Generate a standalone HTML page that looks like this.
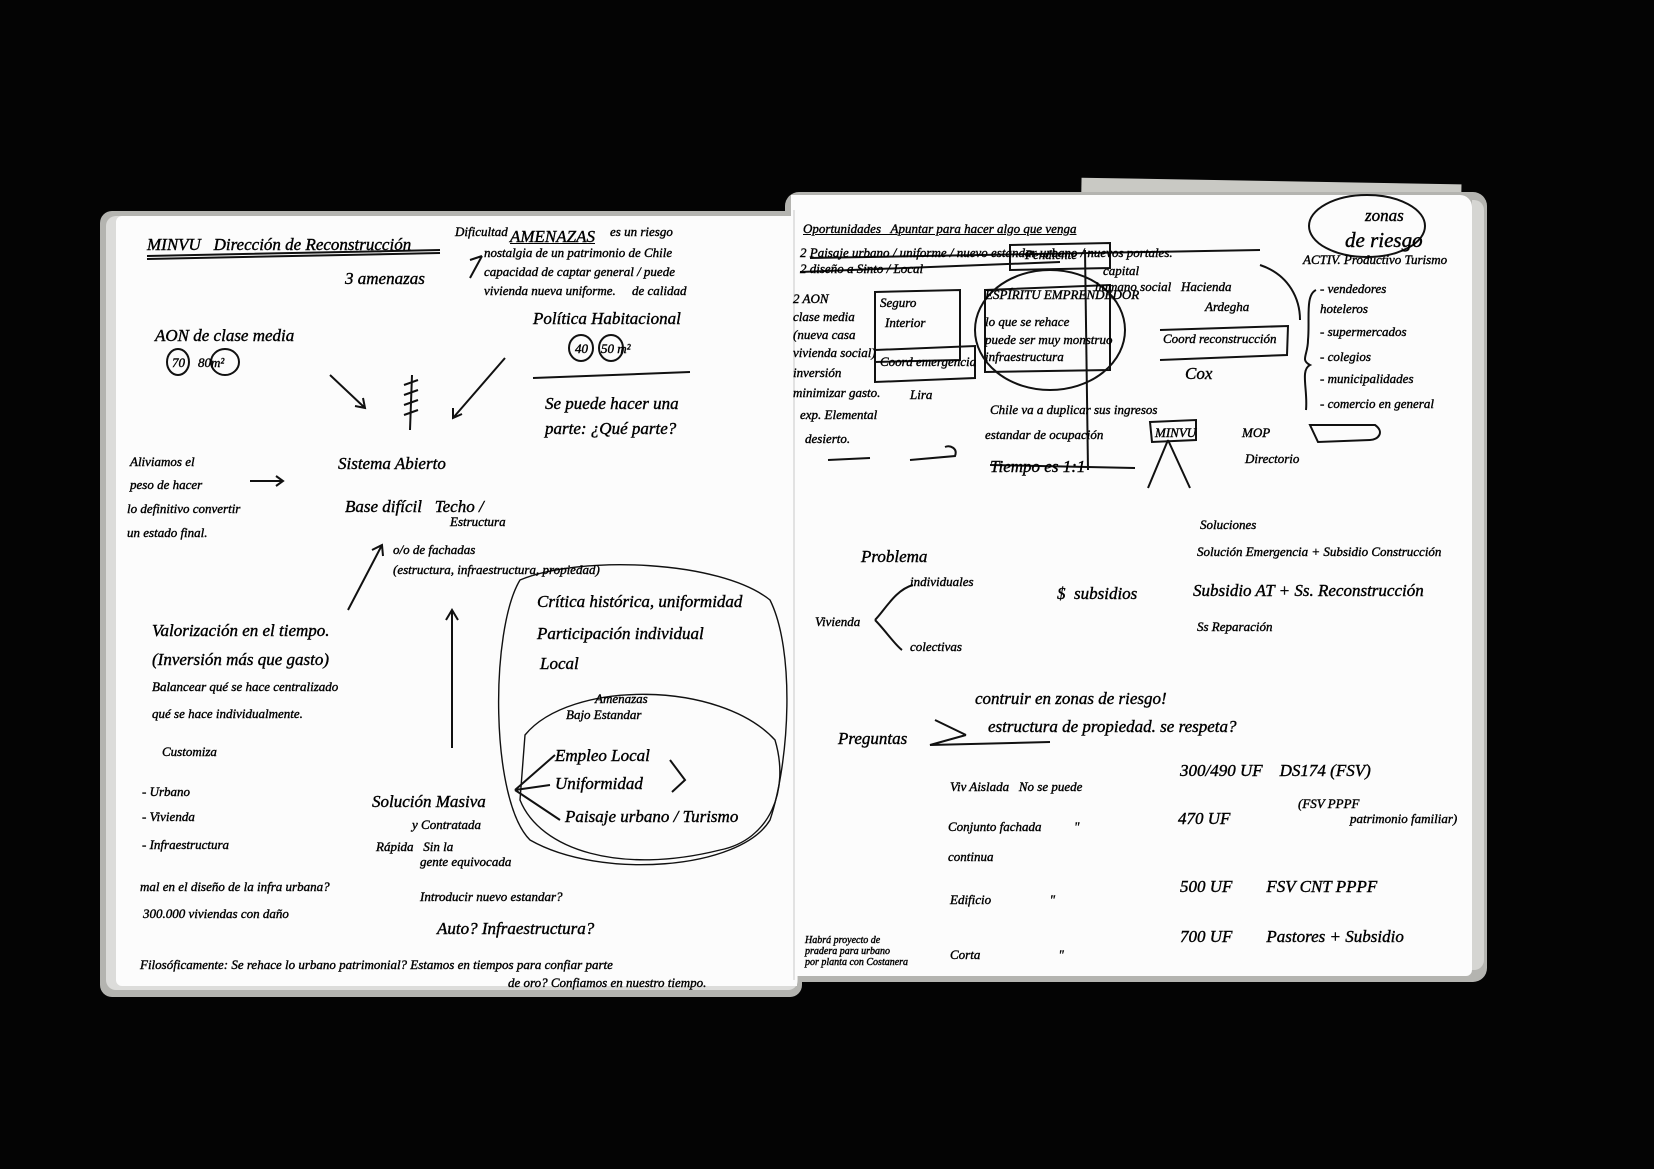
<!DOCTYPE html>
<html><head><meta charset="utf-8"><style>
html,body{margin:0;padding:0;}
body{width:1654px;height:1169px;background:#040404;position:relative;overflow:hidden;font-family:"Liberation Serif",serif;font-style:italic;color:#000;}
.a{position:absolute;white-space:nowrap;font-size:17px;line-height:1;-webkit-text-stroke:0.4px #000;}
.s{font-size:13px}
.l{font-size:21px}
</style></head><body>
<div style="position:absolute;left:1081px;top:181px;width:380px;height:60px;background:#c9c9c4;transform:rotate(1deg)"></div>
<div style="position:absolute;left:1440px;top:250px;width:30px;height:120px;background:#bdbdb8"></div>
<div style="position:absolute;left:100px;top:211px;width:702px;height:786px;background:#b4b4b0;border-radius:12px"></div>
<div style="position:absolute;left:785px;top:192px;width:702px;height:790px;background:#b4b4b0;border-radius:14px"></div>
<div style="position:absolute;left:106px;top:216px;width:692px;height:774px;background:#dcdcda;border-radius:10px"></div>
<div style="position:absolute;left:116px;top:216px;width:681px;height:770px;background:#fcfcfc;border-radius:6px 0 0 6px"></div>
<div style="position:absolute;left:791px;top:195px;width:681px;height:781px;background:#fcfcfc;border-radius:0 12px 6px 0"></div>
<div style="position:absolute;left:1472px;top:200px;width:12px;height:770px;background:#d5d5d2;border-radius:0 10px 10px 0"></div>
<div style="position:absolute;left:793px;top:210px;width:2px;height:770px;background:#e2e2e2"></div>

<svg width="1654" height="1169" style="position:absolute;left:0;top:0" fill="none" stroke="#111" stroke-width="2">
<path d="M147 256 L440 250 M147 259 L440 253"/>
<path d="M482 256 L470 260 M482 256 L470 278"/>
<ellipse cx="178" cy="362" rx="11" ry="13"/><ellipse cx="225" cy="362" rx="14" ry="13"/>
<ellipse cx="581" cy="348" rx="12" ry="13"/><ellipse cx="611" cy="348" rx="12" ry="13"/>
<path d="M533 378 L690 372"/>
<path d="M330 375 L365 408 M363 398 L365 408 L355 406"/>
<path d="M505 358 L453 418 M453 408 L453 418 L462 414"/>
<path d="M412 375 L410 430 M404 385 l14 -5 M404 395 l14 -5 M404 405 l14 -5 M404 415 l14 -5"/>
<path d="M250 481 L283 481 M276 476 L283 481 L276 486"/>
<path d="M348 610 L382 545 M372 550 L382 545 L383 556"/>
<path d="M452 748 L452 610 M446 620 L452 610 L458 620"/>
<path d="M520 580 C580 555 720 560 770 600 C795 650 790 760 770 820 C740 870 600 880 530 840 C490 800 490 630 520 580 Z" stroke-width="1.4"/>
<path d="M525 735 C570 680 720 680 775 740 C790 790 770 840 720 850 C620 875 540 850 520 800 Z" stroke-width="1.4"/>
<path d="M515 790 L555 755 M515 790 L550 785 M515 790 L560 820 M670 760 L685 780 L672 792"/>
<path d="M810 258 L1260 250 M800 272 L1060 262"/>
<path d="M1010 245 L1110 243 L1110 268 L1010 270 Z"/>
<path d="M875 292 L960 290 L960 360 L875 362 Z"/>
<path d="M875 350 L975 346 L975 378 L875 382 Z"/>
<path d="M985 290 L1110 285 L1110 370 L985 372 Z"/>
<ellipse cx="1050" cy="330" rx="75" ry="60"/>
<path d="M1085 250 L1088 470"/>
<path d="M1160 330 L1288 326 L1287 355 L1160 360"/>
<path d="M1260 265 C1290 275 1300 300 1300 320"/>
<ellipse cx="1367" cy="226" rx="58" ry="31"/>
<path d="M1316 290 C1305 295 1310 320 1308 340 C1308 355 1300 360 1310 365 C1300 370 1308 390 1306 410"/>
<path d="M1150 422 L1196 420 L1196 440 L1152 442 Z"/>
<path d="M1168 440 L1148 488 M1168 440 L1190 488"/>
<path d="M1310 425 L1375 425 C1385 432 1378 440 1370 440 L1318 442 Z"/>
<path d="M828 460 L870 458 M910 460 L955 456 C958 448 950 445 945 447"/>
<path d="M990 465 L1135 468"/>
<path d="M913 585 C895 590 885 610 875 620 M875 620 C885 630 895 645 902 650"/>
<path d="M966 735 L930 745 L1050 742 M966 735 L935 720"/>
</svg>

<div class="a" style="left:147px;top:236px">MINVU &nbsp; Dirección de Reconstrucción</div>
<div class="a s" style="left:455px;top:225px">Dificultad</div>
<div class="a" style="left:510px;top:228px;text-decoration:underline">AMENAZAS</div>
<div class="a s" style="left:610px;top:225px">es un riesgo</div>
<div class="a s" style="left:484px;top:246px">nostalgia de un patrimonio de Chile</div>
<div class="a s" style="left:484px;top:265px">capacidad de captar general / puede</div>
<div class="a s" style="left:484px;top:284px">vivienda nueva uniforme. &nbsp;&nbsp;&nbsp; de calidad</div>
<div class="a" style="left:345px;top:270px">3 amenazas</div>
<div class="a" style="left:155px;top:327px">AON de clase media</div>
<div class="a s" style="left:172px;top:356px">70 &nbsp;&nbsp; 80m²</div>
<div class="a" style="left:533px;top:310px">Política Habitacional</div>
<div class="a s" style="left:575px;top:342px">40 &nbsp;&nbsp; 50 m²</div>
<div class="a" style="left:545px;top:395px">Se puede hacer una</div>
<div class="a" style="left:545px;top:420px">parte: ¿Qué parte?</div>
<div class="a s" style="left:130px;top:455px">Aliviamos el</div>
<div class="a s" style="left:130px;top:478px">peso de hacer</div>
<div class="a s" style="left:127px;top:502px">lo definitivo convertir</div>
<div class="a s" style="left:127px;top:526px">un estado final.</div>
<div class="a" style="left:338px;top:455px">Sistema Abierto</div>
<div class="a" style="left:345px;top:498px">Base difícil &nbsp; Techo /</div>
<div class="a s" style="left:450px;top:515px">Estructura</div>
<div class="a s" style="left:393px;top:543px">o/o de fachadas</div>
<div class="a s" style="left:393px;top:563px">(estructura, infraestructura, propiedad)</div>
<div class="a" style="left:537px;top:593px">Crítica histórica, uniformidad</div>
<div class="a" style="left:537px;top:625px">Participación individual</div>
<div class="a" style="left:540px;top:655px">Local</div>
<div class="a s" style="left:595px;top:692px">Amenazas</div>
<div class="a s" style="left:566px;top:708px">Bajo Estandar</div>
<div class="a" style="left:555px;top:747px">Empleo Local</div>
<div class="a" style="left:555px;top:775px">Uniformidad</div>
<div class="a" style="left:565px;top:808px">Paisaje urbano / Turismo</div>
<div class="a" style="left:152px;top:622px">Valorización en el tiempo.</div>
<div class="a" style="left:152px;top:651px">(Inversión más que gasto)</div>
<div class="a s" style="left:152px;top:680px">Balancear qué se hace centralizado</div>
<div class="a s" style="left:152px;top:707px">qué se hace individualmente.</div>
<div class="a s" style="left:162px;top:745px">Customiza</div>
<div class="a s" style="left:142px;top:785px">- Urbano</div>
<div class="a s" style="left:142px;top:810px">- Vivienda</div>
<div class="a s" style="left:142px;top:838px">- Infraestructura</div>
<div class="a" style="left:372px;top:793px">Solución Masiva</div>
<div class="a s" style="left:412px;top:818px">y Contratada</div>
<div class="a s" style="left:376px;top:840px">Rápida &nbsp; Sin la</div>
<div class="a s" style="left:420px;top:855px">gente equivocada</div>
<div class="a s" style="left:140px;top:880px">mal en el diseño de la infra urbana?</div>
<div class="a s" style="left:143px;top:907px">300.000 viviendas con daño</div>
<div class="a s" style="left:420px;top:890px">Introducir nuevo estandar?</div>
<div class="a" style="left:437px;top:920px">Auto? Infraestructura?</div>
<div class="a s" style="left:140px;top:958px">Filosóficamente: Se rehace lo urbano patrimonial? Estamos en tiempos para confiar parte</div>
<div class="a s" style="left:508px;top:976px">de oro? Confiamos en nuestro tiempo.</div>

<div class="a s" style="left:803px;top:222px;text-decoration:underline">Oportunidades &nbsp; Apuntar para hacer algo que venga</div>
<div class="a s" style="left:800px;top:246px">2 Paisaje urbano / uniforme / nuevo estandar urbano / nuevos portales.</div>
<div class="a s" style="left:800px;top:262px">2 diseño a Sinto / Local</div>
<div class="a" style="left:1365px;top:207px">zonas</div>
<div class="a l" style="left:1345px;top:230px">de riesgo</div>
<div class="a s" style="left:1025px;top:248px">Pendiente</div>
<div class="a s" style="left:1103px;top:264px">capital</div>
<div class="a s" style="left:1095px;top:280px">humano social &nbsp; Hacienda</div>
<div class="a s" style="left:1205px;top:300px">Ardegha</div>
<div class="a s" style="left:1303px;top:253px">ACTIV. Productivo Turismo</div>
<div class="a s" style="left:1320px;top:282px">- vendedores</div>
<div class="a s" style="left:1320px;top:302px">hoteleros</div>
<div class="a s" style="left:1320px;top:325px">- supermercados</div>
<div class="a s" style="left:1320px;top:350px">- colegios</div>
<div class="a s" style="left:1320px;top:372px">- municipalidades</div>
<div class="a s" style="left:1320px;top:397px">- comercio en general</div>
<div class="a s" style="left:793px;top:292px">2 AON</div>
<div class="a s" style="left:793px;top:310px">clase media</div>
<div class="a s" style="left:793px;top:328px">(nueva casa</div>
<div class="a s" style="left:793px;top:346px">vivienda social)</div>
<div class="a s" style="left:793px;top:366px">inversión</div>
<div class="a s" style="left:793px;top:386px">minimizar gasto.</div>
<div class="a s" style="left:800px;top:408px">exp. Elemental</div>
<div class="a s" style="left:805px;top:432px">desierto.</div>
<div class="a s" style="left:880px;top:296px">Seguro</div>
<div class="a s" style="left:885px;top:316px">Interior</div>
<div class="a s" style="left:880px;top:355px">Coord emergencia</div>
<div class="a s" style="left:910px;top:388px">Lira</div>
<div class="a s" style="left:985px;top:288px">ESPÍRITU EMPRENDEDOR</div>
<div class="a s" style="left:985px;top:315px">lo que se rehace</div>
<div class="a s" style="left:985px;top:333px">puede ser muy monstruo</div>
<div class="a s" style="left:985px;top:350px">infraestructura</div>
<div class="a s" style="left:1163px;top:332px">Coord reconstrucción</div>
<div class="a" style="left:1185px;top:365px">Cox</div>
<div class="a s" style="left:990px;top:403px">Chile va a duplicar sus ingresos</div>
<div class="a s" style="left:985px;top:428px">estandar de ocupación</div>
<div class="a s" style="left:1155px;top:426px">MINVU</div>
<div class="a s" style="left:1242px;top:426px">MOP</div>
<div class="a s" style="left:1245px;top:452px">Directorio</div>
<div class="a" style="left:990px;top:458px">Tiempo es 1:1</div>
<div class="a s" style="left:1200px;top:518px">Soluciones</div>
<div class="a s" style="left:1197px;top:545px">Solución Emergencia + Subsidio Construcción</div>
<div class="a" style="left:861px;top:548px">Problema</div>
<div class="a s" style="left:910px;top:575px">individuales</div>
<div class="a" style="left:1057px;top:585px">$ &nbsp;subsidios</div>
<div class="a" style="left:1193px;top:582px">Subsidio AT + Ss. Reconstrucción</div>
<div class="a s" style="left:815px;top:615px">Vivienda</div>
<div class="a s" style="left:910px;top:640px">colectivas</div>
<div class="a s" style="left:1197px;top:620px">Ss Reparación</div>
<div class="a" style="left:975px;top:690px">contruir en zonas de riesgo!</div>
<div class="a" style="left:838px;top:730px">Preguntas</div>
<div class="a" style="left:988px;top:718px">estructura de propiedad. se respeta?</div>
<div class="a s" style="left:950px;top:780px">Viv Aislada &nbsp; No se puede</div>
<div class="a" style="left:1180px;top:762px">300/490 UF &nbsp;&nbsp; DS174 (FSV)</div>
<div class="a s" style="left:948px;top:820px">Conjunto fachada &nbsp;&nbsp;&nbsp;&nbsp;&nbsp;&nbsp;&nbsp;&nbsp; "</div>
<div class="a s" style="left:948px;top:850px">continua</div>
<div class="a" style="left:1178px;top:810px">470 UF</div>
<div class="a s" style="left:1298px;top:797px">(FSV PPPF</div>
<div class="a s" style="left:1350px;top:812px">patrimonio familiar)</div>
<div class="a s" style="left:950px;top:893px">Edificio &nbsp;&nbsp;&nbsp;&nbsp;&nbsp;&nbsp;&nbsp;&nbsp;&nbsp;&nbsp;&nbsp;&nbsp;&nbsp;&nbsp;&nbsp;&nbsp; "</div>
<div class="a" style="left:1180px;top:878px">500 UF &nbsp;&nbsp;&nbsp;&nbsp;&nbsp;&nbsp; FSV CNT PPPF</div>
<div class="a s" style="left:950px;top:948px">Corta &nbsp;&nbsp;&nbsp;&nbsp;&nbsp;&nbsp;&nbsp;&nbsp;&nbsp;&nbsp;&nbsp;&nbsp;&nbsp;&nbsp;&nbsp;&nbsp;&nbsp;&nbsp;&nbsp;&nbsp;&nbsp;&nbsp; "</div>
<div class="a" style="left:1180px;top:928px">700 UF &nbsp;&nbsp;&nbsp;&nbsp;&nbsp;&nbsp; Pastores + Subsidio</div>
<div class="a" style="left:805px;top:935px;font-size:10px;line-height:1.1;white-space:normal;width:110px">Habrá proyecto de<br>pradera para urbano<br>por planta con Costanera</div>
</body></html>
